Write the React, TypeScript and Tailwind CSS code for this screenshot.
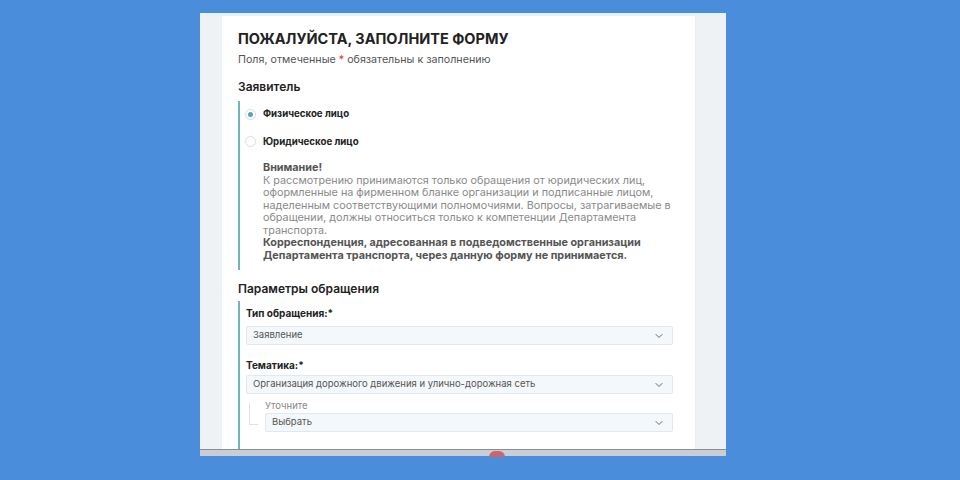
import React from 'react';
import { ChevronDown } from 'lucide-react';

const font = { fontFamily: 'Inter, "Noto Sans", sans-serif' };

function Select({ value }: { value: string }) {
  return (
    <div className="flex h-[19px] items-center justify-between rounded-[2px] border border-[#dfe9ef] bg-[#f4f8fb] pl-[6px] pr-[7px] text-[9.5px] text-[#555]">
      <span>{value}</span>
      <ChevronDown className="h-[12px] w-[12px] text-[#444]" strokeWidth={1.6} />
    </div>
  );
}

function Radio({ checked, label }: { checked?: boolean; label: string }) {
  return (
    <div className="flex items-center gap-[7px]">
      <span className="flex h-[11px] w-[11px] items-center justify-center rounded-full border border-[#d6dde2] bg-white">
        {checked && <span className="h-[5px] w-[5px] rounded-full bg-[#5ba4b1]" />}
      </span>
      <span className="text-[9.7px] font-bold text-[#222]">{label}</span>
    </div>
  );
}

export default function App() {
  return (
    <div className="h-[480px] w-[960px] overflow-hidden bg-[#4a8ddb] pl-[200px] pt-[13px]" style={font}>
      <div className="flex h-[443px] w-[526px] flex-col bg-[#eef2f5]">
        <div className="h-[3px] bg-[#e6f3f9]" />
        <div className="flex flex-1 overflow-hidden">
          <div className="w-[22px] bg-[#eef2f4]" />
          <div className="w-[473px] bg-white pl-[16px] pr-[22px]">
            <h1 className="mt-[12px] text-[14.5px] font-bold leading-[22px] text-[#222]">
              ПОЖАЛУЙСТА, ЗАПОЛНИТЕ ФОРМУ
            </h1>
            <p className="mt-[3px] text-[10.7px] leading-[14px] text-[#555]">
              Поля, отмеченные <span className="text-[#d33]">*</span> обязательны к заполнению
            </p>
            <h2 className="mt-[12px] text-[12px] font-semibold leading-[16px] text-[#222]">Заявитель</h2>

            <div className="mt-[6px] border-l-2 border-[#6fb4c0] pb-[8px] pl-[5px] pt-[6px]">
              <Radio checked label="Физическое лицо" />
              <div className="mt-[13px]">
                <Radio label="Юридическое лицо" />
              </div>
              <div className="mt-[13px] pl-[18px] text-[10.8px] leading-[12.5px] text-[#8a8a8a]">
                <div className="font-bold text-[#555]">Внимание!</div>
                <div>
                  К рассмотрению принимаются только обращения от юридических лиц, оформленные на фирменном
                  бланке организации и подписанные лицом, наделенным соответствующими полномочиями. Вопросы,
                  затрагиваемые в обращении, должны относиться только к компетенции Департамента транспорта.
                </div>
                <div className="font-bold text-[#555]">
                  Корреспонденция, адресованная в подведомственные организации Департамента транспорта, через
                  данную форму не принимается.
                </div>
              </div>
            </div>

            <h2 className="mt-[11px] text-[12px] font-semibold leading-[16px] text-[#222]">Параметры обращения</h2>

            <div className="mt-[4px] h-[200px] border-l-2 border-[#6fb4c0] pl-[6px] pt-[6px]">
              <div className="text-[10px] font-bold leading-[13px] text-[#222]">Тип обращения:*</div>
              <div className="mt-[6px]">
                <Select value="Заявление" />
              </div>
              <div className="mt-[14px] text-[10px] font-bold leading-[13px] text-[#222]">Тематика:*</div>
              <div className="mt-[3px]">
                <Select value="Организация дорожного движения и улично-дорожная сеть" />
              </div>
              <div className="mt-[6px] flex">
                <div className="ml-[3px] mt-[3px] h-[22px] w-[9px] border-b border-l border-[#dde2e6]" />
                <div className="ml-[7px] flex-1">
                  <div className="text-[9.5px] leading-[12px] text-[#888]">Уточните</div>
                  <div className="mt-[1px]">
                    <Select value="Выбрать" />
                  </div>
                </div>
              </div>
            </div>
          </div>
          <div className="w-[31px] border-l border-[#e8edf0] bg-[#eef2f5]" />
        </div>
        <div className="relative h-[7px] border-t border-[#8a8d91] bg-[#c9ced6]">
          <div className="absolute left-[289px] top-[1px] h-[6px] w-[16px] rounded-t-full bg-[#c9656f]" />
        </div>
      </div>
    </div>
  );
}
